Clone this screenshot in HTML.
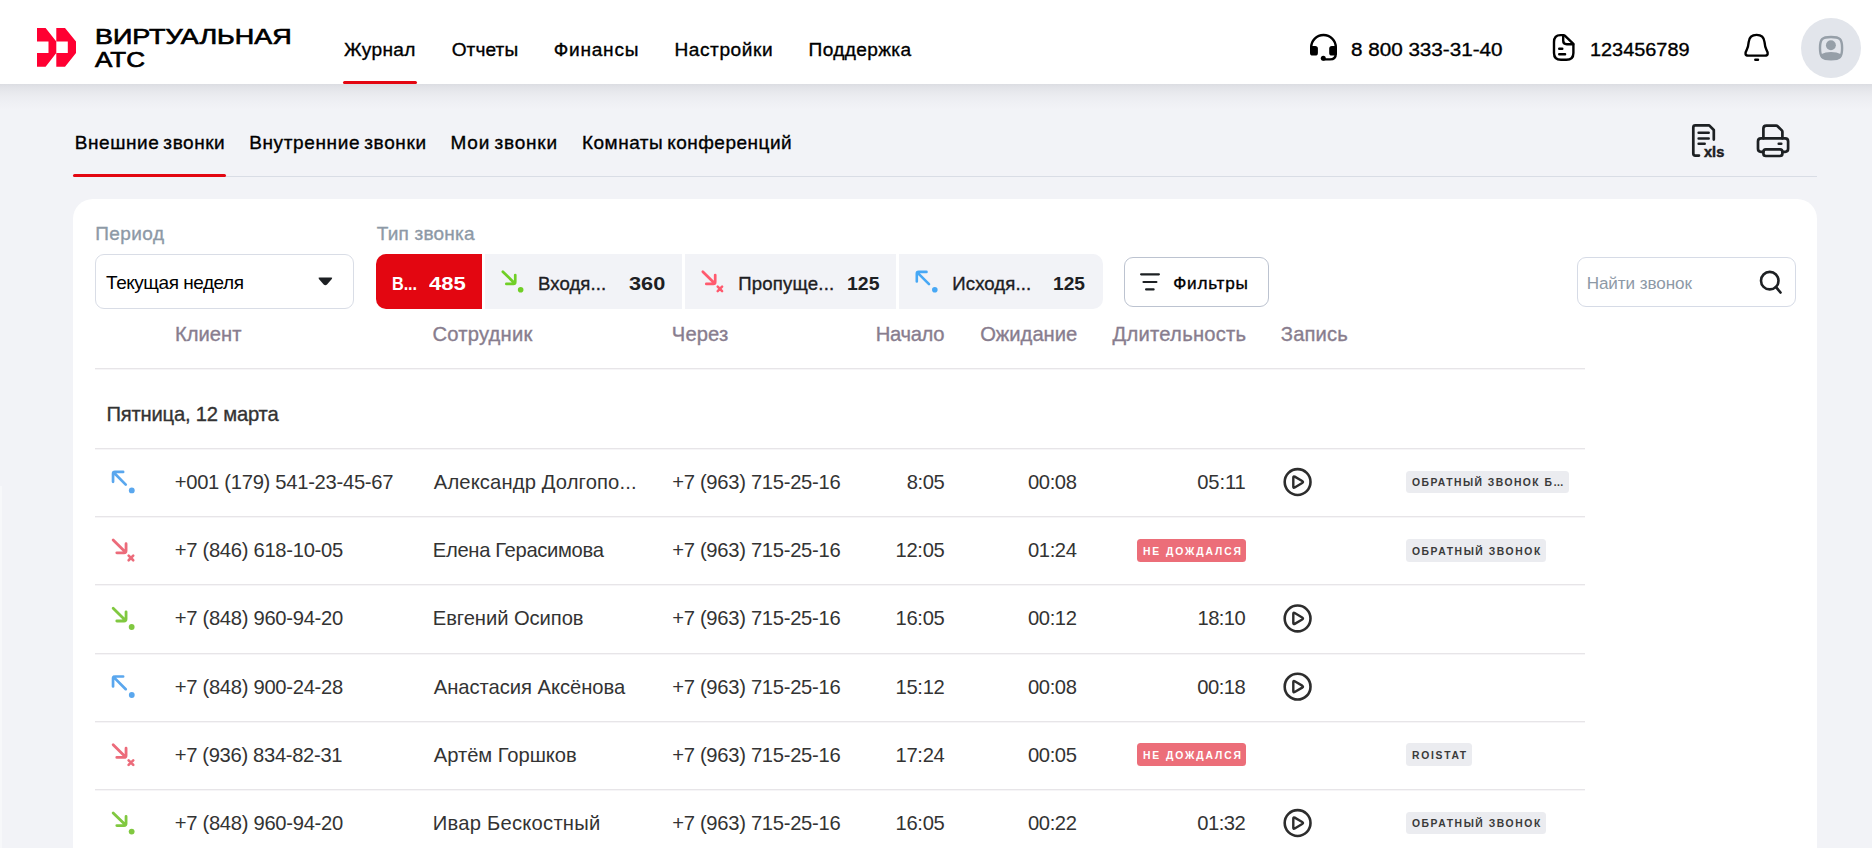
<!DOCTYPE html><html lang='ru'><head><meta charset='utf-8'><title>Виртуальная АТС</title><style>
*{box-sizing:border-box;margin:0;padding:0}
html,body{width:1872px;height:848px;overflow:hidden;background:#f2f3f7;font-family:'Liberation Sans',sans-serif;color:#1d2023}
.a{position:absolute}
.t{position:absolute;white-space:nowrap;line-height:1}
.m{-webkit-text-stroke:0.35px currentColor}
.r{color:#333}
.h{color:#887d8e;-webkit-text-stroke:0.35px currentColor}
.g{color:#8d99a6}
#hdr{position:absolute;left:0;top:0;width:1872px;height:84px;background:#fff}
#shd{position:absolute;left:0;top:84px;width:1872px;height:26px;background:linear-gradient(to bottom,rgba(30,34,48,.105) 0,rgba(30,34,48,.078) 12%,rgba(30,34,48,.052) 30%,rgba(30,34,48,.028) 52%,rgba(30,34,48,.01) 76%,rgba(30,34,48,0) 100%)}
#card{position:absolute;left:73px;top:198.7px;width:1744px;height:700px;background:#fff;border-radius:20px}
.hl{position:absolute;height:1px;background:#e7e5e8;box-shadow:0 1px 0 #f6f5f7}
.seg{position:absolute;top:254px;height:55px;background:#f2f3f7}
.tag{position:absolute;height:22.8px;border-radius:3.5px;background:#ebecf0}
.bdg{position:absolute;height:22.9px;border-radius:3.5px;background:#ec6e79}
</style></head><body>
<div id='shd'></div>
<div class='a' style='left:0;top:486px;width:2px;height:362px;background:#f7f8fa'></div>
<header><div id='hdr'></div>
<svg class='a' style='left:30px;top:20px' width='60' height='55' viewBox='30 20 60 55'><g fill='#ff0032'>
<path d='M37 28.1H45.6L56.3 41.4V53.1L45.6 66.7H37V53.1H48.5V41.6H37Z'/>
<path d='M56.3 28.1H65L76 41.4V53.1L65 66.7H56.3V53.1H67.8V41.6H56.3Z'/></g></svg>
<span class='t' style="top:26.00px;font-size:22.4px;left:94.80px;transform-origin:0 0;transform:scaleX(1.2029);color:#000;-webkit-text-stroke:0.7px #000;">ВИРТУАЛЬНАЯ</span>
<span class='t' style="top:49.00px;font-size:22.4px;left:95.30px;transform-origin:0 0;transform:scaleX(1.1595);color:#000;-webkit-text-stroke:0.7px #000;">АТС</span>
<span class='t m' style="top:40.00px;font-size:19.1px;left:344.10px;letter-spacing:0.314px;color:#000;">Журнал</span>
<span class='t m' style="top:40.00px;font-size:19.1px;left:451.70px;letter-spacing:0.085px;color:#000;">Отчеты</span>
<span class='t m' style="top:40.00px;font-size:19.1px;left:553.80px;letter-spacing:0.744px;color:#000;">Финансы</span>
<span class='t m' style="top:40.00px;font-size:19.1px;left:674.40px;letter-spacing:0.580px;color:#000;">Настройки</span>
<span class='t m' style="top:40.00px;font-size:19.1px;left:808.60px;letter-spacing:0.364px;color:#000;">Поддержка</span>
<div class='a' style='left:343px;top:81px;width:74px;height:3px;background:#e30611;border-radius:1.5px'></div>
<span class='t m' style="top:41.00px;font-size:18.8px;left:1351.00px;transform-origin:0 0;transform:scaleX(1.0990);color:#000;">8 800 333-31-40</span>
<span class='t m' style="top:41.00px;font-size:18.8px;left:1590.44px;transform-origin:0 0;transform:scaleX(1.0588);color:#000;">123456789</span>
<svg class='a' style='left:1304px;top:28px' width='40' height='40' viewBox='0 0 40 40'><g fill='none' stroke='#000' stroke-width='2.4' stroke-linecap='round'><path d='M7.2 21V19.3A12.3 12.3 0 0 1 31.8 19.3V25.5Q31.8 31.4 26 31.4H19.5'/></g><rect x='6' y='17.9' width='7.9' height='9.7' rx='2.7' fill='#000'/><rect x='25.2' y='17.9' width='7.8' height='9.7' rx='2.7' fill='#000'/><circle cx='19.3' cy='30.3' r='2.5' fill='#000'/></svg>
<svg class='a' style='left:1544px;top:28px' width='40' height='40' viewBox='0 0 40 40'><g fill='none' stroke='#000' stroke-width='2.4' stroke-linecap='round' stroke-linejoin='round'><path d='M19.5 7.1H16.5Q10 7.1 10 14V25Q10 31.8 17 31.8H22.4Q29.4 31.8 29.4 25V15.8L20.8 7.6Q20.2 7.1 19.5 7.1Z'/><path d='M19.2 7.3V12.8Q19.2 16.2 22.8 16.2H29.2'/><path d='M15.2 20.75H18.3M15.2 26.3H21.1'/></g></svg>
<svg class='a' style='left:1736px;top:28px' width='40' height='40' viewBox='0 0 40 40'><g fill='none' stroke='#000' stroke-width='2.4' stroke-linecap='round' stroke-linejoin='round'><path d='M20.6 6.9C15.4 6.9 13.1 10 12.7 14C12.4 17.5 12 19.6 10.6 22.2C8.9 25 8.9 27.6 12.3 27.6H28.9C32.3 27.6 32.3 25 30.6 22.2C29.2 19.6 28.8 17.5 28.5 14C28.1 10 25.8 6.9 20.6 6.9Z'/><path d='M19.3 31.8H22'/></g></svg>
<div class='a' style='left:1801px;top:18px;width:60px;height:60px;border-radius:50%;background:#e2e5eb'></div>
<svg class='a' style='left:1811px;top:28px' width='40' height='40' viewBox='0 0 40 40'><path d='M20 9C11 9 9 11 9 20.1C9 29.3 11 31.3 20 31.3C29.1 31.3 31.1 29.3 31.1 20.1C31.1 11 29.1 9 20 9Z' fill='none' stroke='#969fa8' stroke-width='2.4'/><circle cx='19.9' cy='17.2' r='4.95' fill='#969fa8'/><path d='M9.3 26.4Q20 21.8 30.8 26.4C30.2 30.5 27.5 31.3 20 31.3C12.5 31.3 9.9 30.5 9.3 26.4Z' fill='#969fa8'/></svg>
</header><main><div class='tools'>
<svg class='a' style='left:1684px;top:118px' width='48' height='48' viewBox='0 0 48 48'><g fill='none' stroke='#1d2023' stroke-width='2.7' stroke-linecap='round' stroke-linejoin='round'><path d='M15 37.6H11.3Q9.3 37.6 9.3 35.6V9.4Q9.3 7.4 11.3 7.4H25.2L29.8 12V21.6'/><path d='M14.6 14.8H24.7M14.6 20.4H24.7M14.6 25.75H20.7' stroke-width='2.5'/></g><text x='20' y='39' font-family="'Liberation Sans',sans-serif" font-weight='700' font-size='15.5' textLength='20.3' lengthAdjust='spacingAndGlyphs' fill='#1d2023' stroke='#1d2023' stroke-width='0.5'>xls</text></svg>
<svg class='a' style='left:1749px;top:118px' width='48' height='48' viewBox='0 0 48 48'><g fill='none' stroke='#1d2023' stroke-width='2.7' stroke-linecap='round' stroke-linejoin='round'><path d='M14.4 33.8H12Q9 33.8 9 30.8V23.3Q9 20.3 12 20.3H36.1Q39.1 20.3 39.1 23.3V30.8Q39.1 33.8 36.1 33.8H33.4'/><path d='M14.4 20.3V10.6Q14.4 7.6 17.4 7.6H27.2Q28 7.6 28.6 8.2L32.8 12.4Q33.4 13 33.4 13.8V20.3'/><rect x='14.4' y='31.4' width='19' height='6.6' rx='2.5'/><path d='M29.7 25.75H32.3' stroke-width='2.5'/></g></svg>
</div>
<nav class='tabs'>
<span class='t m' style="top:133.00px;font-size:19px;left:74.80px;word-spacing:-1.8px;letter-spacing:0.555px;color:#000;">Внешние звонки</span>
<span class='t m' style="top:133.00px;font-size:19px;left:249.20px;word-spacing:-1.8px;letter-spacing:0.631px;color:#000;">Внутренние звонки</span>
<span class='t m' style="top:133.00px;font-size:19px;left:450.50px;word-spacing:-1.8px;letter-spacing:0.815px;color:#000;">Мои звонки</span>
<span class='t m' style="top:133.00px;font-size:19px;left:582.00px;word-spacing:-1.8px;letter-spacing:0.495px;color:#000;">Комнаты конференций</span>
<div class='a' style='left:73px;top:176px;width:1744px;height:1px;background:#d9dde5'></div>
<div class='a' style='left:73px;top:174px;width:153px;height:3px;background:#e30611;border-radius:1.5px'></div>
</nav>
<section class='journal'><div id='card'></div><div class='filters'>
<span class='t m g' style="top:224.00px;font-size:19px;left:95.20px;letter-spacing:0.429px;">Период</span>
<span class='t m g' style="top:224.00px;font-size:19px;left:376.70px;letter-spacing:0.219px;">Тип звонка</span>
<div class='a' style='left:95px;top:254px;width:259px;height:55px;border:1px solid #d9dde6;border-radius:9px;background:#fff'></div>
<span class='t' style="top:273.00px;font-size:19px;left:106.10px;letter-spacing:-0.465px;color:#000;">Текущая неделя</span>
<svg class='a' style='left:316px;top:275px' width='18' height='13' viewBox='316 275 18 13'><path d='M319.6 277.6H331.1Q332.9 277.6 331.8 279L327 284.4Q325.35 286 323.7 284.4L318.9 279Q317.8 277.6 319.6 277.6Z' fill='#1d2023'/></svg>
<div class='seg' style='left:376px;width:106px;background:#e30611;border-radius:10px 0 0 10px'></div>
<div class='seg' style='left:485px;width:197px'></div>
<div class='seg' style='left:685px;width:211px'></div>
<div class='seg' style='left:899px;width:204px;border-radius:0 10px 10px 0'></div>
<span class='t' style="top:275.00px;font-size:18.5px;left:392.02px;transform-origin:0 0;transform:scaleX(0.88);letter-spacing:-0.130px;font-weight:700;color:#fff;">В...</span>
<span class='t' style="top:275.00px;font-size:18.5px;left:428.70px;transform-origin:0 0;transform:scaleX(1.1904);font-weight:700;color:#fff;">485</span>
<span class='t m' style="top:275.00px;font-size:18.6px;left:538.10px;letter-spacing:0.048px;">Входя...</span>
<span class='t' style="top:275.00px;font-size:18.5px;left:629.30px;transform-origin:0 0;transform:scaleX(1.1741);font-weight:700;">360</span>
<span class='t m' style="top:275.00px;font-size:18.6px;left:738.30px;letter-spacing:0.170px;">Пропуще...</span>
<span class='t' style="top:275.00px;font-size:18.5px;left:847.15px;transform-origin:0 0;transform:scaleX(1.0515);font-weight:700;">125</span>
<span class='t m' style="top:275.00px;font-size:18.6px;left:952.30px;letter-spacing:0.096px;">Исходя...</span>
<span class='t' style="top:275.00px;font-size:18.5px;left:1053.07px;transform-origin:0 0;transform:scaleX(1.0346);font-weight:700;">125</span>
<svg class='a' style='left:500px;top:269px' width='30' height='30' viewBox='0 0 30 30'><g transform='translate(0.25 0.20) scale(1)'><path d='M2.6 2.5L14.3 14M6.1 14.7H13.1Q15 14.7 15 12.8V5.9' fill='none' stroke='#70cf26' stroke-width='2.7' stroke-linecap='round' stroke-linejoin='round'/><circle cx='20.4' cy='20.5' r='2.8' fill='#70cf26'/></g></svg>
<svg class='a' style='left:700px;top:269px' width='30' height='30' viewBox='0 0 30 30'><g transform='translate(0.20 0.20) scale(1)'><path d='M2.6 2.5L14.3 14M6.1 14.7H13.1Q15 14.7 15 12.8V5.9' fill='none' stroke='#ff5a6e' stroke-width='2.7' stroke-linecap='round' stroke-linejoin='round'/><path d='M17.5 17.5L21.9 21.9M21.9 17.5L17.5 21.9' stroke='#ff5a6e' stroke-width='2.5' stroke-linecap='round'/></g></svg>
<svg class='a' style='left:914px;top:269px' width='30' height='30' viewBox='0 0 30 30'><g transform='translate(0.30 0.40) scale(1)'><path d='M14.7 14.7L2.9 2.9M2.5 12V4.3Q2.5 2.5 4.3 2.5H12.2' fill='none' stroke='#47a8f5' stroke-width='2.6' stroke-linecap='round' stroke-linejoin='round'/><circle cx='20.5' cy='20.3' r='2.8' fill='#47a8f5'/></g></svg>
<div class='a' style='left:1124px;top:257px;width:145px;height:50px;border:1px solid #bcc3d0;border-radius:9px;background:#fff'></div>
<svg class='a' style='left:1136px;top:270px' width='28' height='24' viewBox='1136 270 28 24'><path d='M1141.1 274.3H1158.9M1143.5 282H1156.4M1146.1 289.4H1153.6' stroke='#1d2023' stroke-width='2.2' stroke-linecap='round'/></svg>
<span class='t m' style="top:275.00px;font-size:17.2px;left:1173.20px;letter-spacing:0.760px;color:#000;">Фильтры</span>
<div class='a' style='left:1577px;top:257px;width:219px;height:50px;border:1px solid #d6dbe6;border-radius:9px;background:#fff'></div>
<span class='t g' style="top:275.00px;font-size:17.1px;left:1586.70px;letter-spacing:-0.082px;">Найти звонок</span>
<svg class='a' style='left:1756px;top:268px' width='30' height='30' viewBox='1756 268 30 30'><circle cx='1769.75' cy='280.65' r='8.75' fill='none' stroke='#1d2023' stroke-width='2.6'/><path d='M1776 287.1L1780.5 292.5' stroke='#1d2023' stroke-width='2.7' stroke-linecap='round'/></svg>
</div>
<div class='calls'>
<div class='hl' style='left:95px;top:368px;width:1490px'></div>
<div class='hl' style='left:95px;top:448px;width:1490px'></div>
<div class='hl' style='left:95px;top:516.2px;width:1490px'></div>
<div class='hl' style='left:95px;top:584.4px;width:1490px'></div>
<div class='hl' style='left:95px;top:652.6px;width:1490px'></div>
<div class='hl' style='left:95px;top:720.8px;width:1490px'></div>
<div class='hl' style='left:95px;top:789px;width:1490px'></div>
<span class='t h' style="top:324.00px;font-size:20.2px;left:175.00px;">Клиент</span>
<span class='t h' style="top:324.00px;font-size:20.2px;left:432.40px;letter-spacing:0.220px;">Сотрудник</span>
<span class='t h' style="top:324.00px;font-size:20.2px;left:671.80px;letter-spacing:0.127px;">Через</span>
<span class='t h' style="top:324.00px;font-size:20.2px;left:875.70px;letter-spacing:-0.303px;">Начало</span>
<span class='t h' style="top:324.00px;font-size:20.2px;left:980.20px;letter-spacing:-0.016px;">Ожидание</span>
<span class='t h' style="top:324.00px;font-size:20.2px;left:1112.60px;letter-spacing:0.244px;">Длительность</span>
<span class='t h' style="top:324.00px;font-size:20.2px;left:1280.80px;letter-spacing:0.135px;">Запись</span>
<span class='t m r' style="top:404.00px;font-size:20.2px;left:106.50px;letter-spacing:-0.200px;">Пятница, 12 марта</span>
<div class='row'>
<svg class='a' style='left:110px;top:469px' width='30' height='30' viewBox='0 0 30 30'><g transform='translate(0.45 0.30) scale(1.04)'><path d='M14.7 14.7L2.9 2.9M2.5 12V4.3Q2.5 2.5 4.3 2.5H12.2' fill='none' stroke='#5aa7ee' stroke-width='2.6' stroke-linecap='round' stroke-linejoin='round'/><circle cx='20.5' cy='20.3' r='2.8' fill='#5aa7ee'/></g></svg>
<span class='t r' style="top:472.00px;font-size:20.2px;left:174.70px;letter-spacing:-0.286px;">+001 (179) 541-23-45-67</span>
<span class='t r' style="top:472.00px;font-size:20.2px;left:433.80px;letter-spacing:0.132px;">Александр Долгопо...</span>
<span class='t r' style="top:472.00px;font-size:20.2px;left:672.20px;letter-spacing:-0.292px;">+7 (963) 715-25-16</span>
<span class='t r' style="top:472.00px;font-size:20.2px;left:906.80px;letter-spacing:-0.421px;">8:05</span>
<span class='t r' style="top:472.00px;font-size:20.2px;left:1028.00px;letter-spacing:-0.398px;">00:08</span>
<span class='t r' style="top:472.00px;font-size:20.2px;left:1197.20px;letter-spacing:-0.123px;">05:11</span>
<svg class='a' style='left:1281px;top:466px' width='34' height='34' viewBox='0 0 34 34'><g transform='translate(16.60 16.05)'><circle r='12.9' fill='none' stroke='#2d2d2d' stroke-width='2.6'/><path d='M-4.3 -4.6Q-4.3 -6.2 -2.9 -5.4L4.6 -1Q6.2 0 4.6 1L-2.9 5.4Q-4.3 6.2 -4.3 4.6Z' fill='none' stroke='#2d2d2d' stroke-width='2.4' stroke-linejoin='round'/></g></svg>
<div class='tag' style='left:1405.8px;top:470.55px;width:163.1px'></div>
<span class='t' style="top:477.00px;font-size:11.5px;left:1411.60px;transform-origin:0 0;transform:scaleX(0.9);letter-spacing:1.615px;font-weight:700;color:#3a3a3a;">ОБРАТНЫЙ ЗВОНОК Б…</span>
</div>
<div class='row'>
<svg class='a' style='left:110px;top:537px' width='30' height='30' viewBox='0 0 30 30'><g transform='translate(0.45 0.50) scale(1.04)'><path d='M2.6 2.5L14.3 14M6.1 14.7H13.1Q15 14.7 15 12.8V5.9' fill='none' stroke='#ec6b7a' stroke-width='2.7' stroke-linecap='round' stroke-linejoin='round'/><path d='M17.5 17.5L21.9 21.9M21.9 17.5L17.5 21.9' stroke='#ec6b7a' stroke-width='2.5' stroke-linecap='round'/></g></svg>
<span class='t r' style="top:540.00px;font-size:20.2px;left:174.70px;letter-spacing:-0.286px;">+7 (846) 618-10-05</span>
<span class='t r' style="top:540.00px;font-size:20.2px;left:432.80px;letter-spacing:-0.320px;">Елена Герасимова</span>
<span class='t r' style="top:540.00px;font-size:20.2px;left:672.20px;letter-spacing:-0.292px;">+7 (963) 715-25-16</span>
<span class='t r' style="top:540.00px;font-size:20.2px;left:895.50px;letter-spacing:-0.298px;">12:05</span>
<span class='t r' style="top:540.00px;font-size:20.2px;left:1028.00px;letter-spacing:-0.398px;">01:24</span>
<div class='bdg' style='left:1137px;top:538.8px;width:109.4px'></div>
<span class='t' style="top:546.00px;font-size:11.5px;left:1143.00px;transform-origin:0 0;transform:scaleX(0.9);letter-spacing:2.110px;font-weight:700;color:#fff;">НЕ ДОЖДАЛСЯ</span>
<div class='tag' style='left:1405.8px;top:538.75px;width:140.7px'></div>
<span class='t' style="top:546.00px;font-size:11.5px;left:1411.60px;transform-origin:0 0;transform:scaleX(0.9);letter-spacing:1.741px;font-weight:700;color:#3a3a3a;">ОБРАТНЫЙ ЗВОНОК</span>
</div>
<div class='row'>
<svg class='a' style='left:110px;top:605px' width='30' height='30' viewBox='0 0 30 30'><g transform='translate(0.45 0.70) scale(1.04)'><path d='M2.6 2.5L14.3 14M6.1 14.7H13.1Q15 14.7 15 12.8V5.9' fill='none' stroke='#80c840' stroke-width='2.7' stroke-linecap='round' stroke-linejoin='round'/><circle cx='20.4' cy='20.5' r='2.8' fill='#80c840'/></g></svg>
<span class='t r' style="top:608.00px;font-size:20.2px;left:174.70px;letter-spacing:-0.286px;">+7 (848) 960-94-20</span>
<span class='t r' style="top:608.00px;font-size:20.2px;left:432.80px;letter-spacing:-0.068px;">Евгений Осипов</span>
<span class='t r' style="top:608.00px;font-size:20.2px;left:672.20px;letter-spacing:-0.292px;">+7 (963) 715-25-16</span>
<span class='t r' style="top:608.00px;font-size:20.2px;left:895.50px;letter-spacing:-0.298px;">16:05</span>
<span class='t r' style="top:608.00px;font-size:20.2px;left:1028.00px;letter-spacing:-0.398px;">00:12</span>
<span class='t r' style="top:608.00px;font-size:20.2px;left:1197.50px;letter-spacing:-0.573px;">18:10</span>
<svg class='a' style='left:1281px;top:602px' width='34' height='34' viewBox='0 0 34 34'><g transform='translate(16.60 16.45)'><circle r='12.9' fill='none' stroke='#2d2d2d' stroke-width='2.6'/><path d='M-4.3 -4.6Q-4.3 -6.2 -2.9 -5.4L4.6 -1Q6.2 0 4.6 1L-2.9 5.4Q-4.3 6.2 -4.3 4.6Z' fill='none' stroke='#2d2d2d' stroke-width='2.4' stroke-linejoin='round'/></g></svg>
</div>
<div class='row'>
<svg class='a' style='left:110px;top:673px' width='30' height='30' viewBox='0 0 30 30'><g transform='translate(0.45 0.90) scale(1.04)'><path d='M14.7 14.7L2.9 2.9M2.5 12V4.3Q2.5 2.5 4.3 2.5H12.2' fill='none' stroke='#5aa7ee' stroke-width='2.6' stroke-linecap='round' stroke-linejoin='round'/><circle cx='20.5' cy='20.3' r='2.8' fill='#5aa7ee'/></g></svg>
<span class='t r' style="top:677.00px;font-size:20.2px;left:174.70px;letter-spacing:-0.286px;">+7 (848) 900-24-28</span>
<span class='t r' style="top:677.00px;font-size:20.2px;left:433.80px;letter-spacing:-0.036px;">Анастасия Аксёнова</span>
<span class='t r' style="top:677.00px;font-size:20.2px;left:672.20px;letter-spacing:-0.292px;">+7 (963) 715-25-16</span>
<span class='t r' style="top:677.00px;font-size:20.2px;left:895.50px;letter-spacing:-0.298px;">15:12</span>
<span class='t r' style="top:677.00px;font-size:20.2px;left:1028.00px;letter-spacing:-0.398px;">00:08</span>
<span class='t r' style="top:677.00px;font-size:20.2px;left:1197.20px;letter-spacing:-0.498px;">00:18</span>
<svg class='a' style='left:1281px;top:670px' width='34' height='34' viewBox='0 0 34 34'><g transform='translate(16.60 16.65)'><circle r='12.9' fill='none' stroke='#2d2d2d' stroke-width='2.6'/><path d='M-4.3 -4.6Q-4.3 -6.2 -2.9 -5.4L4.6 -1Q6.2 0 4.6 1L-2.9 5.4Q-4.3 6.2 -4.3 4.6Z' fill='none' stroke='#2d2d2d' stroke-width='2.4' stroke-linejoin='round'/></g></svg>
</div>
<div class='row'>
<svg class='a' style='left:110px;top:742px' width='30' height='30' viewBox='0 0 30 30'><g transform='translate(0.45 0.10) scale(1.04)'><path d='M2.6 2.5L14.3 14M6.1 14.7H13.1Q15 14.7 15 12.8V5.9' fill='none' stroke='#ec6b7a' stroke-width='2.7' stroke-linecap='round' stroke-linejoin='round'/><path d='M17.5 17.5L21.9 21.9M21.9 17.5L17.5 21.9' stroke='#ec6b7a' stroke-width='2.5' stroke-linecap='round'/></g></svg>
<span class='t r' style="top:745.00px;font-size:20.2px;left:174.70px;letter-spacing:-0.328px;">+7 (936) 834-82-31</span>
<span class='t r' style="top:745.00px;font-size:20.2px;left:433.80px;letter-spacing:-0.044px;">Артём Горшков</span>
<span class='t r' style="top:745.00px;font-size:20.2px;left:672.20px;letter-spacing:-0.292px;">+7 (963) 715-25-16</span>
<span class='t r' style="top:745.00px;font-size:20.2px;left:895.50px;letter-spacing:-0.298px;">17:24</span>
<span class='t r' style="top:745.00px;font-size:20.2px;left:1028.00px;letter-spacing:-0.398px;">00:05</span>
<div class='bdg' style='left:1137px;top:743.4px;width:109.4px'></div>
<span class='t' style="top:750.00px;font-size:11.5px;left:1143.00px;transform-origin:0 0;transform:scaleX(0.9);letter-spacing:2.110px;font-weight:700;color:#fff;">НЕ ДОЖДАЛСЯ</span>
<div class='tag' style='left:1405.8px;top:743.35px;width:66.7px'></div>
<span class='t' style="top:750.00px;font-size:11.5px;left:1411.60px;transform-origin:0 0;transform:scaleX(0.9);letter-spacing:1.896px;font-weight:700;color:#3a3a3a;">ROISTAT</span>
</div>
<div class='row'>
<svg class='a' style='left:110px;top:810px' width='30' height='30' viewBox='0 0 30 30'><g transform='translate(0.45 0.30) scale(1.04)'><path d='M2.6 2.5L14.3 14M6.1 14.7H13.1Q15 14.7 15 12.8V5.9' fill='none' stroke='#80c840' stroke-width='2.7' stroke-linecap='round' stroke-linejoin='round'/><circle cx='20.4' cy='20.5' r='2.8' fill='#80c840'/></g></svg>
<span class='t r' style="top:813.00px;font-size:20.2px;left:174.70px;letter-spacing:-0.286px;">+7 (848) 960-94-20</span>
<span class='t r' style="top:813.00px;font-size:20.2px;left:432.80px;letter-spacing:0.234px;">Ивар Бескостный</span>
<span class='t r' style="top:813.00px;font-size:20.2px;left:672.20px;letter-spacing:-0.292px;">+7 (963) 715-25-16</span>
<span class='t r' style="top:813.00px;font-size:20.2px;left:895.50px;letter-spacing:-0.298px;">16:05</span>
<span class='t r' style="top:813.00px;font-size:20.2px;left:1028.00px;letter-spacing:-0.398px;">00:22</span>
<span class='t r' style="top:813.00px;font-size:20.2px;left:1197.20px;letter-spacing:-0.498px;">01:32</span>
<svg class='a' style='left:1281px;top:807px' width='34' height='34' viewBox='0 0 34 34'><g transform='translate(16.60 16.05)'><circle r='12.9' fill='none' stroke='#2d2d2d' stroke-width='2.6'/><path d='M-4.3 -4.6Q-4.3 -6.2 -2.9 -5.4L4.6 -1Q6.2 0 4.6 1L-2.9 5.4Q-4.3 6.2 -4.3 4.6Z' fill='none' stroke='#2d2d2d' stroke-width='2.4' stroke-linejoin='round'/></g></svg>
<div class='tag' style='left:1405.8px;top:811.55px;width:140.7px'></div>
<span class='t' style="top:818.00px;font-size:11.5px;left:1411.60px;transform-origin:0 0;transform:scaleX(0.9);letter-spacing:1.741px;font-weight:700;color:#3a3a3a;">ОБРАТНЫЙ ЗВОНОК</span>
</div>
</div></section></main></body></html>
